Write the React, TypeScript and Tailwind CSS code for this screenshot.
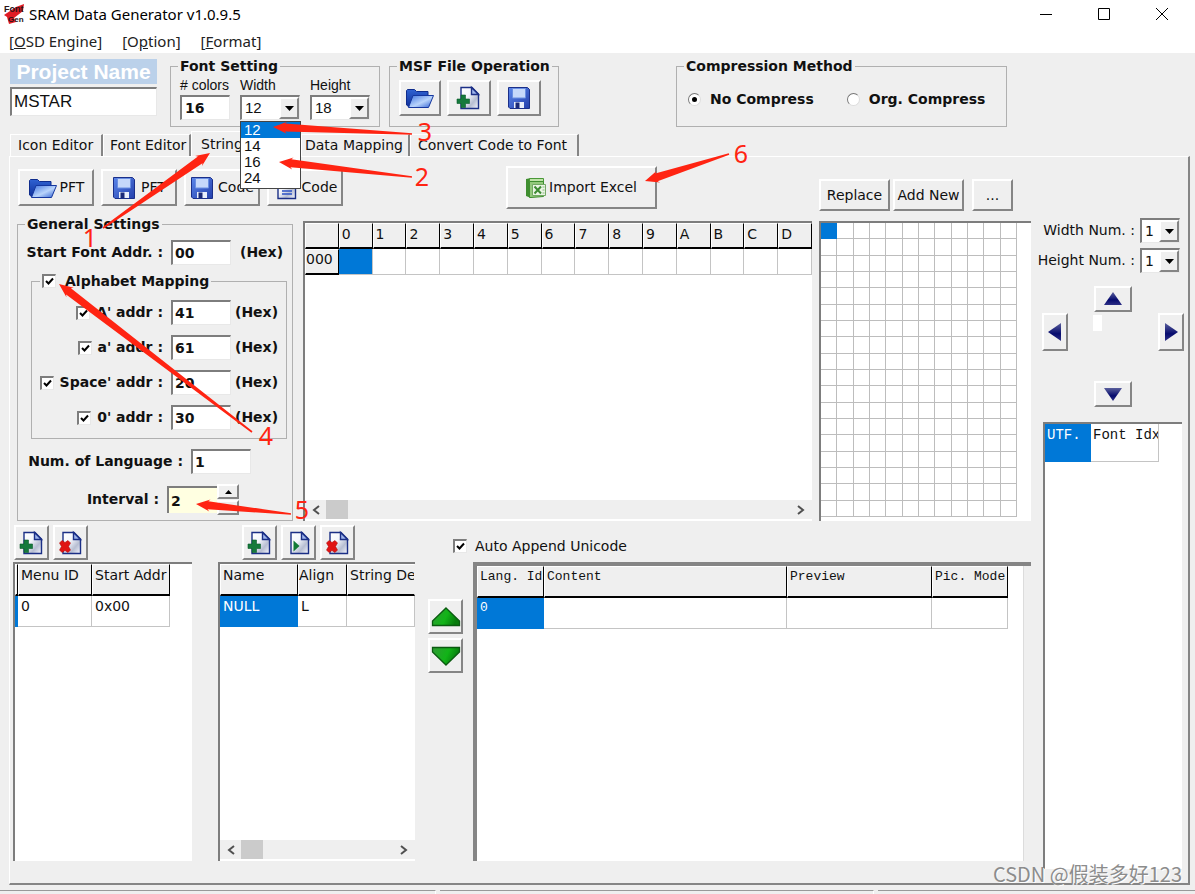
import React, { useId, useState } from "react";
import type { ReactNode } from "react";

/* ---------- icons ---------- */

function FolderIcon() {
  return (
    <svg width="30" height="24" viewBox="0 0 30 24" aria-hidden="true">
      <defs>
        <linearGradient id="folderBack" x1="0" y1="0" x2="0" y2="1">
          <stop offset="0" stopColor="#2f62d2" />
          <stop offset="1" stopColor="#10309a" />
        </linearGradient>
        <linearGradient id="folderFront" x1="0" y1="0" x2="1" y2="1">
          <stop offset="0" stopColor="#3f74e0" />
          <stop offset="0.55" stopColor="#b9d4fb" />
          <stop offset="1" stopColor="#2a5cd0" />
        </linearGradient>
      </defs>
      <path d="M1.500 4.500 2.500 3.500H9.500L11.500 5.500H23V10H8.500L4 21 1.500 19Z" fill="url(#folderBack)" stroke="#0f2c8c" />
      <path d="M8 9.500H28.500L23.500 21.500H3.500Z" fill="url(#folderFront)" stroke="#15379f" />
    </svg>
  );
}

function FloppyIcon() {
  return (
    <svg width="24" height="24" viewBox="0 0 24 24" aria-hidden="true">
      <defs>
        <linearGradient id="disk" x1="0" y1="0" x2="1" y2="1">
          <stop offset="0" stopColor="#5b86ea" />
          <stop offset="1" stopColor="#2440ac" />
        </linearGradient>
      </defs>
      <path d="M1.500 1.500H20.500L22.500 3.500V22.500H3L1.500 21Z" fill="url(#disk)" stroke="#1a2f8a" />
      <path d="M5.500 2.500H18.500V12H5.500Z" fill="#c6d8fa" stroke="#6a8fe2" />
      <path d="M7 16H17V22H7Z" fill="#e9effc" />
      <path d="M8.500 16.500H12.500V22H8.500Z" fill="#1b2a78" />
    </svg>
  );
}

type PageMark = "plus" | "cross" | "play" | "lines";

function PageIcon({ mark }: { mark: PageMark }) {
  return (
    <svg width="26" height="26" viewBox="0 0 26 26" aria-hidden="true">
      <defs>
        <linearGradient id="sheet" x1="0" y1="0" x2="1" y2="1">
          <stop offset="0" stopColor="#ffffff" />
          <stop offset="0.4" stopColor="#f4f6fc" />
          <stop offset="0.7" stopColor="#b7bed2" />
          <stop offset="1" stopColor="#f5f7ff" />
        </linearGradient>
      </defs>
      <path d="M5 2.500H16L22.500 9V23.500H5Z" fill="url(#sheet)" stroke="#1b2f86" strokeWidth="1.400" />
      <path d="M15.500 2.500V9.500H22.500Z" fill="#9db4ec" stroke="#1b2f86" strokeWidth="1.400" />
      {mark === "plus" && (
        <path d="M5 10H9.500V14H13.500V18.500H9.500V22.500H5V18.500H1V14H5Z" fill="#157a3c" stroke="#0c5c2a" strokeWidth="0.600" />
      )}
      {mark === "cross" && (
        <path d="M1.500 13 4 10.500 7 12.500 10 10.500 12.500 13 10.500 16.500 12.500 20 10 22.500 7 20.500 4 22.500 1.500 20 3.500 16.500Z" fill="#e01414" stroke="#b50d0d" strokeWidth="0.600" />
      )}
      {mark === "play" && <path d="M7.500 10.500 13.500 16 7.500 21.500Z" fill="#127a36" />}
      {mark === "lines" && <path d="M9 13H19M9 16H19M9 19H19" stroke="#2d51c4" strokeWidth="1.400" />}
    </svg>
  );
}

function ExcelIcon() {
  return (
    <svg width="22" height="22" viewBox="0 0 22 22" aria-hidden="true">
      <path d="M1 2 6 1V21L1 19Z" fill="#3f8e30" />
      <path d="M4.500 1.500H18.500V6H4.500Z" fill="#bfe3a8" stroke="#4a9838" />
      <path d="M4.500 4.500H18.500V19.500L6 20.500H4.500Z" fill="#93c97c" stroke="#3f8e30" />
      <path d="M7.500 7.500H20.500V18.500H7.500Z" fill="#eaf5e4" stroke="#73a865" />
      <path d="M9.500 9.500 16 16.500M16 9.500 9.500 16.500" stroke="#3d8b33" strokeWidth="2" />
      <path d="M17.500 10H19.500M17.500 13H19.500M17.500 16H19.500" stroke="#8ab681" />
    </svg>
  );
}

function LogoIcon() {
  return (
    <svg width="20" height="20" viewBox="0 0 20 20" aria-hidden="true">
      <path d="M20 0 12 3 0 11 3 13 5 20 12 18 10 14 19 7Z" fill="#e01c24" />
      <text x="0" y="8" fontSize="9" fontWeight="700" fontFamily="Liberation Sans, sans-serif" fill="#2a1416">Font</text>
      <text x="4" y="18" fontSize="8" fontWeight="700" fontFamily="Liberation Sans, sans-serif" fill="#2a1416">Gen</text>
    </svg>
  );
}

type Direction = "up" | "down" | "left" | "right";

const trianglePaths: Record<Direction, string> = {
  up: "M10 3 19 16H1Z",
  down: "M10 17 19 4H1Z",
  left: "M3 10 16 1V19Z",
  right: "M17 10 4 1V19Z",
};

function NavyTriangle({ direction }: { direction: Direction }) {
  return (
    <svg width="20" height="20" viewBox="0 0 20 20" aria-hidden="true">
      <defs>
        <linearGradient id="navy" x1="0" y1="0" x2="0" y2="1">
          <stop offset="0" stopColor="#5a5f9c" />
          <stop offset="0.6" stopColor="#060b6e" />
          <stop offset="1" stopColor="#2d2f86" />
        </linearGradient>
      </defs>
      <path d={trianglePaths[direction]} fill="url(#navy)" />
    </svg>
  );
}

function GreenTriangle({ direction }: { direction: "up" | "down" }) {
  return (
    <svg width="30" height="20" viewBox="0 0 30 20" aria-hidden="true">
      <defs>
        <linearGradient id="leaf" x1="0" y1="0" x2="1" y2="0.300">
          <stop offset="0" stopColor="#2f9a34" />
          <stop offset="0.6" stopColor="#12b418" />
          <stop offset="1" stopColor="#067a0c" />
        </linearGradient>
      </defs>
      <path
        d={direction === "up" ? "M15 1 28.500 14V18.500H1.500V14Z" : "M15 19 28.500 6V1.500H1.500V6Z"}
        fill="url(#leaf)"
        stroke="#0a5a10"
        strokeWidth="1.300"
      />
    </svg>
  );
}

function Caret({ up = false }: { up?: boolean }) {
  return (
    <svg width="9" height="5" viewBox="0 0 9 5" aria-hidden="true">
      <path d={up ? "M1 5H8L4.500 1Z" : "M0 0H9L4.500 5Z"} fill="#000" />
    </svg>
  );
}

function Chevron({ right = false }: { right?: boolean }) {
  return (
    <svg width="10" height="10" viewBox="0 0 10 10" aria-hidden="true">
      <path d={right ? "M2 1 7 5 2 9" : "M8 1 3 5 8 9"} fill="none" stroke="#505050" strokeWidth="2" />
    </svg>
  );
}

/* ---------- controls ---------- */

const raised =
  "flex items-center justify-center border-t-2 border-l-2 border-r-2 border-b-2 border-t-white border-l-white border-r-[#858585] border-b-[#858585] bg-[#efefef]";
const sunken =
  "border-t-2 border-l-2 border-r border-b border-t-[#7d7d7d] border-l-[#7d7d7d] border-r-[#e8e8e8] border-b-[#e8e8e8] bg-white";

function IconButton({ label, className, children }: { label: string; className: string; children: ReactNode }) {
  return (
    <button type="button" aria-label={label} className={`${raised} ${className}`}>
      {children}
    </button>
  );
}

function TextButton({ className, children }: { className: string; children: ReactNode }) {
  return (
    <button type="button" className={`${raised} whitespace-nowrap ${className}`}>
      {children}
    </button>
  );
}

function Tick({ id, label }: { id?: string; label?: string }) {
  return (
    <span className="inline-grid size-[14px] shrink-0">
      <input
        id={id}
        type="checkbox"
        aria-label={label}
        defaultChecked
        className={`peer col-start-1 row-start-1 size-[14px] appearance-none ${sunken}`}
      />
      <svg
        viewBox="0 0 14 14"
        className="pointer-events-none invisible col-start-1 row-start-1 size-[14px] peer-checked:visible"
        aria-hidden="true"
      >
        <path d="M4 7 6.500 9.500 11 4.500" fill="none" stroke="#000" strokeWidth="2" />
      </svg>
    </span>
  );
}

function Picker({
  id,
  value,
  options,
  className,
}: {
  id: string;
  value: string;
  options: string[];
  className: string;
}) {
  return (
    <span className={`grid ${sunken} ${className}`}>
      <select id={id} defaultValue={value} className="col-start-1 row-start-1 h-full w-full appearance-none bg-transparent pl-[3px]">
        {options.map((option) => (
          <option key={option}>{option}</option>
        ))}
      </select>
      <span
        className={`pointer-events-none col-start-1 row-start-1 h-full w-[20px] justify-self-end ${raised}`}
      >
        <Caret />
      </span>
    </span>
  );
}

function Group({ legend, className, children }: { legend: ReactNode; className: string; children: ReactNode }) {
  return (
    <fieldset className={`min-w-0 border border-[#b0b0b0] ${className}`}>
      <legend className="px-[2px] leading-4 font-bold whitespace-nowrap">{legend}</legend>
      {children}
    </fieldset>
  );
}

function ScrollBar() {
  return (
    <div className="flex h-[19px] items-center bg-[#efefef] px-[6px]">
      <Chevron />
      <div className="ml-[5px] h-[19px] w-[22px] bg-[#cbcbcb]" />
      <div className="ml-auto">
        <Chevron right />
      </div>
    </div>
  );
}

/* ---------- header ---------- */

function TitleBar() {
  return (
    <header className="flex h-[30px] items-center bg-white pb-[2px] pl-1">
      <LogoIcon />
      <h1 className="ml-[5px] flex-1 font-['Noto_Sans',sans-serif] text-[15px] text-black">SRAM Data Generator v1.0.9.5</h1>
      <button type="button" aria-label="Minimize" className="flex w-[58px] justify-center">
        <svg width="14" height="14" viewBox="0 0 14 14"><path d="M1 7.500H13" stroke="#000" /></svg>
      </button>
      <button type="button" aria-label="Maximize" className="flex w-[58px] justify-center">
        <svg width="14" height="14" viewBox="0 0 14 14"><path d="M1.500 1.500H12.500V12.500H1.500Z" fill="none" stroke="#000" /></svg>
      </button>
      <button type="button" aria-label="Close" className="mr-1 flex w-[58px] justify-center">
        <svg width="14" height="14" viewBox="0 0 14 14"><path d="M1 1 13 13M13 1 1 13" stroke="#000" /></svg>
      </button>
    </header>
  );
}

function MenuBar() {
  return (
    <nav className="flex h-[23px] items-center gap-[20px] bg-white pl-[9px] font-['Noto_Sans',sans-serif] text-[15px] text-[#222]">
      <button type="button">[<u>O</u>SD Engine]</button>
      <button type="button">[O<u>p</u>tion]</button>
      <button type="button">[<u>F</u>ormat]</button>
    </nav>
  );
}

const glyphWidths = ["12", "14", "16", "24"];

function FontSetting() {
  return (
    <Group legend="Font Setting" className="h-[69px] w-[210px] pl-[7px]">
      <div className="flex gap-[10px] pt-[2px] pl-[2px] font-['Liberation_Sans',Arial,sans-serif] text-[15px] leading-[18px]">
        <div className="flex w-[50px] flex-col gap-px">
          <label htmlFor="colors" className="text-[14px] whitespace-nowrap">
            # colors
          </label>
          <input id="colors" defaultValue="16" className={`h-[25px] w-full pl-[3px] font-['DejaVu_Sans',Verdana,sans-serif] text-[14px] font-bold ${sunken}`} />
        </div>
        <div className="relative flex w-[60px] flex-col gap-px">
          <label htmlFor="width" className="text-[14px]">Width</label>
          <Picker id="width" value="12" options={glyphWidths} className="h-[25px]" />
          <ul className="absolute top-[45px] left-0 z-10 w-[61px] border border-[#444] bg-white pb-[2px] leading-[16px]">
            {glyphWidths.map((size) => (
              <li key={size} className={size === "12" ? "bg-[#0078d7] pl-[3px] text-white" : "pl-[3px]"}>
                {size}
              </li>
            ))}
          </ul>
        </div>
        <div className="flex w-[60px] flex-col gap-px">
          <label htmlFor="height" className="text-[14px]">Height</label>
          <Picker id="height" value="18" options={["18"]} className="h-[25px]" />
        </div>
      </div>
    </Group>
  );
}

function TopSettings() {
  return (
    <section className="flex h-[78px] items-start pt-[5px] pl-[10px]">
      <div className="mt-px flex w-[147px] flex-col gap-[3px] font-['Liberation_Sans',Arial,sans-serif]">
        <label htmlFor="project" className="h-[25px] bg-[#bbd1ea] text-center text-[21px] leading-[25px] font-bold whitespace-nowrap text-white">
          Project Name
        </label>
        <input id="project" defaultValue="MSTAR" className={`h-[29px] w-full pl-[2px] text-[17px] ${sunken}`} />
      </div>
      <div className="ml-[13px]">
        <FontSetting />
      </div>
      <div className="ml-[9px]">
        <Group legend="MSF File Operation" className="h-[69px] w-[170px] pl-[7px]">
          <div className="flex gap-[6px] pt-[6px] pl-[2px]">
            <IconButton label="Open file" className="h-[36px] w-[42px]"><FolderIcon /></IconButton>
            <IconButton label="New file" className="h-[36px] w-[44px]"><PageIcon mark="plus" /></IconButton>
            <IconButton label="Save file" className="h-[36px] w-[44px]"><FloppyIcon /></IconButton>
          </div>
        </Group>
      </div>
      <div className="ml-[117px]">
        <Group legend="Compression Method" className="h-[69px] w-[331px] pl-[7px]">
          <div className="flex gap-[33px] pt-[15px] pl-[4px] font-bold whitespace-nowrap">
            <label className="flex items-center gap-[9px]">
              <Radio checked />
              No Compress
            </label>
            <label className="flex items-center gap-[9px]">
              <Radio />
              Org. Compress
            </label>
          </div>
        </Group>
      </div>
    </section>
  );
}

function Radio({ checked = false }: { checked?: boolean }) {
  return (
    <span className="inline-grid size-[13px] place-items-center">
      <input
        type="radio"
        name="compression"
        defaultChecked={checked}
        className="peer col-start-1 row-start-1 size-[13px] appearance-none rounded-full border border-t-[#777] border-r-[#ddd] border-b-[#ddd] border-l-[#777] bg-white"
      />
      <span className="pointer-events-none invisible col-start-1 row-start-1 size-[5px] rounded-full bg-black peer-checked:visible" />
    </span>
  );
}

const tabs = [
  { name: "Icon Editor", size: "w-[93px] pl-[7px]" },
  { name: "Font Editor", size: "w-[88px] pl-[6px]" },
  { name: "String Editor", size: "w-[110px] pl-[9px]" },
  { name: "Data Mapping", size: "w-[109px] pl-[3px]" },
  { name: "Convert Code to Font", size: "w-[169px] pl-[7px]" },
];

function TabStrip() {
  const [active, setActive] = useState("String Editor");
  return (
    <div role="tablist" className="flex h-[25px] items-end pl-[10px]">
      {tabs.map(({ name, size }) => (
        <button
          key={name}
          type="button"
          role="tab"
          aria-selected={name === active}
          onClick={() => setActive(name)}
          className={`border-t border-l border-t-white border-l-white text-left whitespace-nowrap ${size} ${
            name === active ? "h-[25px]" : "h-[22px] border-r-2 border-r-[#858585]"
          }`}
        >
          {name}
        </button>
      ))}
    </div>
  );
}

/* ---------- string editor ---------- */

function Toolbar() {
  return (
    <div className="flex items-start justify-between pr-[18px] pl-[8px]">
      <div className="mt-[3px] flex gap-[7px]">
        <TextButton className="h-[37px] w-[76px] gap-[2px]"><FolderIcon />PFT</TextButton>
        <TextButton className="h-[37px] w-[76px] gap-[5px]"><FloppyIcon />PFT</TextButton>
        <TextButton className="h-[37px] w-[76px] gap-[4px]"><FloppyIcon />Code</TextButton>
        <TextButton className="h-[37px] w-[76px] gap-[3px]"><PageIcon mark="lines" />Code</TextButton>
      </div>
      <TextButton className="h-[43px] w-[151px] gap-[2px]"><ExcelIcon />Import Excel</TextButton>
      <div className="mt-[13px] flex">
        <TextButton className="h-[32px] w-[71px]">Replace</TextButton>
        <TextButton className="ml-[3px] h-[32px] w-[71px]">Add New</TextButton>
        <TextButton className="ml-[8px] h-[32px] w-[41px]">...</TextButton>
      </div>
    </div>
  );
}

function HexRow({ name, value }: { name: string; value: string }) {
  const id = useId();
  return (
    <div className="flex h-[25px] items-center">
      <div className="flex w-[131px] items-center justify-end gap-[6px]">
        <Tick label={`Use ${name}`} />
        <label htmlFor={id} className="whitespace-nowrap">{name} addr :</label>
      </div>
      <input id={id} defaultValue={value} className={`ml-[8px] h-[25px] w-[60px] pl-[2px] ${sunken}`} />
      <span className="ml-[4px]">(Hex)</span>
    </div>
  );
}

function GeneralSettings() {
  return (
    <Group legend="General Settings" className="flex w-[276px] shrink-0 flex-col pl-[7px] font-bold">
      <div className="-ml-[7px] flex flex-col whitespace-nowrap">
        <div className="mt-[8px] flex h-[25px] items-center">
          <label htmlFor="start" className="w-[145px] text-right">Start Font Addr. :</label>
          <input id="start" defaultValue="00" className={`ml-[8px] h-[25px] w-[60px] pl-[2px] ${sunken}`} />
          <span className="ml-[9px]">(Hex)</span>
        </div>
        <div className="mt-[8px] ml-[13px]">
          <Group
            legend={
              <label className="flex items-center gap-[9px]">
                <Tick />
                Alphabet Mapping
              </label>
            }
            className="h-[166px] w-[256px] pl-[8px]"
          >
            <div className="-ml-[8px] flex flex-col gap-[10px] pt-[11px]">
              <HexRow name="A'" value="41" />
              <HexRow name="a'" value="61" />
              <HexRow name="Space'" value="20" />
              <HexRow name="0'" value="30" />
            </div>
          </Group>
        </div>
        <div className="mt-[10px] flex h-[25px] items-center">
          <label htmlFor="languages" className="w-[165px] text-right">Num. of Language :</label>
          <input id="languages" defaultValue="1" className={`ml-[8px] h-[25px] w-[60px] pl-[2px] ${sunken}`} />
        </div>
        <div className="mt-[10px] flex h-[31px] items-center">
          <label htmlFor="interval" className="w-[141px] text-right">Interval :</label>
          <input
            id="interval"
            defaultValue="2"
            className="ml-[8px] h-[27px] w-[50px] border-t-2 border-l-2 border-[#7d7d7d] bg-[#ffffe1] pl-[2px]"
          />
          <div className="flex flex-col gap-px">
            <IconButton label="Increase interval" className="h-[15px] w-[22px]"><Caret up /></IconButton>
            <IconButton label="Decrease interval" className="h-[15px] w-[22px]"><Caret /></IconButton>
          </div>
        </div>
      </div>
    </Group>
  );
}

const headCell =
  "overflow-hidden border-t border-l border-r border-b-2 border-t-white border-l-white border-r-black border-b-black bg-[#efefef] text-left font-normal whitespace-nowrap";
const bodyCell = "overflow-hidden border-r border-b border-[#c4c4c4]";

const codeColumns = ["0", "1", "2", "3", "4", "5", "6", "7", "8", "9", "A", "B", "C", "D"];

function CodeGrid() {
  return (
    <div className="mt-[5px] flex min-w-0 flex-1 flex-col border-t-2 border-l-2 border-[#7d7d7d] bg-white">
      <table className="w-full table-fixed border-separate border-spacing-0">
        <thead>
          <tr className="h-[26px]">
            <th className={headCell} aria-label="Row" />
            {codeColumns.map((column) => (
              <th key={column} scope="col" className={`${headCell} pl-[2px] align-top leading-[20px]`}>{column}</th>
            ))}
          </tr>
        </thead>
        <tbody>
          <tr className="h-[26px]">
            <th scope="row" className={`${headCell} align-top leading-[18px]`}>000</th>
            {codeColumns.map((column) => (
              <td key={column} className={column === "0" ? `${bodyCell} bg-[#0078d7]` : bodyCell} />
            ))}
          </tr>
        </tbody>
      </table>
      <div className="mt-auto border-b-2 border-white">
        <ScrollBar />
      </div>
    </div>
  );
}

const pixelCells = Array.from({ length: 12 * 18 }, (_, index) => index);

function PixelGrid() {
  return (
    <div className="mt-[5px] w-[212px] shrink-0 border-t-2 border-l-2 border-[#7d7d7d] bg-white">
      <div className="grid h-[294px] w-[196px] grid-cols-12 grid-rows-[repeat(18,1fr)]">
        {pixelCells.map((index) => (
          <span key={index} className={index === 0 ? "bg-[#0078d7]" : "border-r border-b border-[#bdbdbd]"} />
        ))}
      </div>
    </div>
  );
}

function MenuTable() {
  return (
    <div className="flex w-[179px] shrink-0 flex-col">
      <div className="flex h-[41px] items-start gap-[4px] pt-[4px] pl-px">
        <IconButton label="Add menu" className="size-[35px]"><PageIcon mark="plus" /></IconButton>
        <IconButton label="Delete menu" className="size-[35px]"><PageIcon mark="cross" /></IconButton>
      </div>
      <div className="flex-1 border-t-2 border-l-2 border-[#7d7d7d] bg-white">
        <table className="w-[155px] table-fixed border-separate border-spacing-0">
          <colgroup>
            <col className="w-[3px]" />
            <col className="w-[74px]" />
            <col className="w-[78px]" />
          </colgroup>
          <thead>
            <tr className="h-[32px]">
              <th className={headCell} aria-label="Selected" />
              <th className={`${headCell} pl-[2px] align-top leading-[20px]`}>Menu ID</th>
              <th className={`${headCell} pl-[2px] align-top leading-[20px]`}>Start Addr</th>
            </tr>
          </thead>
          <tbody>
            <tr className="h-[31px]">
              <td className="bg-[#0078d7]" />
              <td className={`${bodyCell} pl-[3px] align-top leading-[20px]`}>0</td>
              <td className={`${bodyCell} pl-[3px] align-top leading-[20px]`}>0x00</td>
            </tr>
          </tbody>
        </table>
      </div>
    </div>
  );
}

function StringTable() {
  return (
    <div className="ml-[26px] flex w-[197px] shrink-0 flex-col">
      <div className="flex h-[41px] items-start gap-[4px] pt-[4px] pl-[24px]">
        <IconButton label="Add string" className="size-[35px]"><PageIcon mark="plus" /></IconButton>
        <IconButton label="Insert string" className="size-[35px]"><PageIcon mark="play" /></IconButton>
        <IconButton label="Delete string" className="size-[35px]"><PageIcon mark="cross" /></IconButton>
      </div>
      <div className="flex flex-1 flex-col border-t-2 border-l-2 border-[#7d7d7d] bg-white">
        <table className="w-full table-fixed border-separate border-spacing-0">
          <colgroup>
            <col className="w-[78px]" />
            <col className="w-[49px]" />
            <col />
          </colgroup>
          <thead>
            <tr className="h-[32px]">
              <th className={`${headCell} pl-[2px] align-top leading-[20px]`}>Name</th>
              <th className={`${headCell} align-top leading-[20px]`}>Align</th>
              <th className={`${headCell} border-r-transparent pl-[2px] align-top leading-[20px]`}>String De</th>
            </tr>
          </thead>
          <tbody>
            <tr className="h-[31px]">
              <td className="bg-[#0078d7] pl-[3px] align-top leading-[20px] text-white">NULL</td>
              <td className={`${bodyCell} pl-[3px] align-top leading-[20px]`}>L</td>
              <td className={bodyCell} />
            </tr>
          </tbody>
        </table>
        <div className="mt-auto border-b-2 border-white">
          <ScrollBar />
        </div>
      </div>
    </div>
  );
}

function LanguageTable() {
  return (
    <div className="ml-[13px] flex min-w-0 flex-1 flex-col">
      <label className="flex h-[41px] items-center gap-[8px] pt-[9px] pl-[25px]">
        <Tick />
        Auto Append Unicode
      </label>
      <div className="flex flex-1">
        <div className="mr-[10px] flex flex-col gap-[4px] pt-[37px]">
          <IconButton label="Move up" className="size-[35px]"><GreenTriangle direction="up" /></IconButton>
          <IconButton label="Move down" className="size-[35px]"><GreenTriangle direction="down" /></IconButton>
        </div>
        <div className="flex min-w-0 flex-1 border-t-4 border-l-4 border-[#858585] bg-[#efefef] pr-[7px]">
          <div className="min-w-0 flex-1 border-r border-[#dcdcdc] bg-white">
            <table className="w-[calc(100%-15px)] table-fixed border-separate border-spacing-0 font-['Liberation_Mono','Courier_New',monospace] text-[13px]">
              <colgroup>
                <col className="w-[67px]" />
                <col />
                <col className="w-[145px]" />
                <col className="w-[76px]" />
              </colgroup>
              <thead>
                <tr className="h-[32px]">
                  {["Lang. Idx", "Content", "Preview", "Pic. Mode"].map((name) => (
                    <th key={name} className={`${headCell} pl-[2px] align-top leading-[20px]`}>{name}</th>
                  ))}
                </tr>
              </thead>
              <tbody>
                <tr className="h-[31px]">
                  <td className="bg-[#0078d7] pl-[3px] align-top leading-[20px] text-white">0</td>
                  <td className={bodyCell} />
                  <td className={bodyCell} />
                  <td className={bodyCell} />
                </tr>
              </tbody>
            </table>
          </div>
        </div>
      </div>
    </div>
  );
}

function SidePanel() {
  return (
    <aside className="flex w-[157px] shrink-0 flex-col pt-[61px] pr-[4px]">
      <div className="mr-[4px] flex flex-col gap-[5px] whitespace-nowrap">
        <div className="flex items-center justify-end gap-[5px]">
          <label htmlFor="wnum">Width Num. :</label>
          <Picker id="wnum" value="1" options={["1"]} className="h-[25px] w-[40px]" />
        </div>
        <div className="flex items-center justify-end gap-[5px]">
          <label htmlFor="hnum">Height Num. :</label>
          <Picker id="hnum" value="1" options={["1"]} className="h-[25px] w-[40px]" />
        </div>
      </div>
      <div className="mt-[13px] ml-[11px] flex flex-col items-center">
        <IconButton label="Shift up" className="h-[26px] w-[38px]"><NavyTriangle direction="up" /></IconButton>
        <div className="mt-px flex w-full items-center justify-between">
          <IconButton label="Shift left" className="h-[38px] w-[26px]"><NavyTriangle direction="left" /></IconButton>
          <div className="mr-[32px] mb-[18px] h-[16px] w-[9px] bg-white" />
          <IconButton label="Shift right" className="h-[38px] w-[26px]"><NavyTriangle direction="right" /></IconButton>
        </div>
        <IconButton label="Shift down" className="mt-[30px] h-[26px] w-[38px]"><NavyTriangle direction="down" /></IconButton>
      </div>
      <div className="mt-[15px] mr-[2px] mb-[14px] ml-[12px] flex-1 border-t-2 border-l-2 border-[#7d7d7d] bg-white">
        <table className="w-[114px] table-fixed border-separate border-spacing-0 font-['Liberation_Mono','Courier_New',monospace] text-[14px]">
          <tbody>
            <tr className="h-[38px]">
              <td className="w-[46px] bg-[#0078d7] pl-[2px] align-top leading-[22px] text-white">UTF.</td>
              <td className={`${bodyCell} pl-[2px] align-top leading-[22px] whitespace-nowrap`}>Font Idx</td>
            </tr>
          </tbody>
        </table>
      </div>
    </aside>
  );
}

function StringEditor() {
  return (
    <main className="mr-[5px] ml-[9px] flex flex-1 border-t border-r-2 border-b-2 border-l border-t-white border-r-[#858585] border-b-[#858585] border-l-white">
      <div className="flex min-w-0 flex-1 flex-col pt-[9px]">
        <Toolbar />
        <div className="mt-[5px] flex h-[305px] pl-[7px]">
          <GeneralSettings />
          <div className="w-[10px] shrink-0" />
          <CodeGrid />
          <div className="w-[7px] shrink-0" />
          <PixelGrid />
        </div>
        <div className="mb-[22px] flex flex-1 pl-[3px]">
          <MenuTable />
          <StringTable />
          <LanguageTable />
        </div>
      </div>
      <SidePanel />
    </main>
  );
}

/* ---------- callouts ---------- */

type Callout = { label: string; at: [number, number]; tail: [number, number]; tip: [number, number] };

const callouts: Callout[] = [
  { label: "1", at: [90, 247], tail: [103, 228], tip: [210, 153] },
  { label: "2", at: [422, 186], tail: [412, 177], tip: [279, 162] },
  { label: "3", at: [425, 141], tail: [412, 134], tip: [273, 127] },
  { label: "4", at: [266, 445], tail: [252, 432], tip: [59, 284] },
  { label: "5", at: [302, 519], tail: [291, 514], tip: [196, 504] },
  { label: "6", at: [741, 163], tail: [729, 154], tip: [645, 181] },
];

function arrowPoints([x0, y0]: [number, number], [x1, y1]: [number, number]) {
  const length = Math.hypot(x1 - x0, y1 - y0);
  const ux = (x1 - x0) / length;
  const uy = (y1 - y0) / length;
  const at = (back: number, side: number) => `${x1 - ux * back - uy * side},${y1 - uy * back + ux * side}`;
  return [at(0, 0), at(14, 6), at(12, 4), at(length, 0.8), at(length, -0.8), at(12, -4), at(14, -6)].join(" ");
}

function Callouts() {
  return (
    <svg className="pointer-events-none absolute top-0 left-0 z-20" width="800" height="560" aria-hidden="true">
      {callouts.map(({ label, at, tail, tip }) => (
        <g key={label} fill="#ff2412">
          <polygon points={arrowPoints(tail, tip)} />
          <text x={at[0]} y={at[1]} textAnchor="middle" fontSize="25" fontFamily="'Noto Sans', sans-serif">
            {label}
          </text>
        </g>
      ))}
    </svg>
  );
}

export default function App() {
  return (
    <div className="relative flex min-h-screen flex-col bg-[#efefef] font-['DejaVu_Sans',Verdana,sans-serif] text-[14px] text-[#111]">
      <TitleBar />
      <MenuBar />
      <TopSettings />
      <TabStrip />
      <StringEditor />
      <footer className="mt-[5px] flex h-[4px] gap-[4px]">
        <div className="w-[436px] border-t border-r border-t-[#999] border-r-white" />
        <div className="w-[434px] border-t border-r border-t-[#999] border-r-white" />
        <div className="flex-1 border-t border-t-[#999]" />
      </footer>
      <Callouts />
      <p className="absolute right-[13px] bottom-[6px] z-20 font-['Noto_Sans_CJK_SC',sans-serif] text-[20px] leading-[28px] text-[#8c8c8c] [text-shadow:1px_1px_0_#fff]">
        CSDN @假装多好123
      </p>
    </div>
  );
}
